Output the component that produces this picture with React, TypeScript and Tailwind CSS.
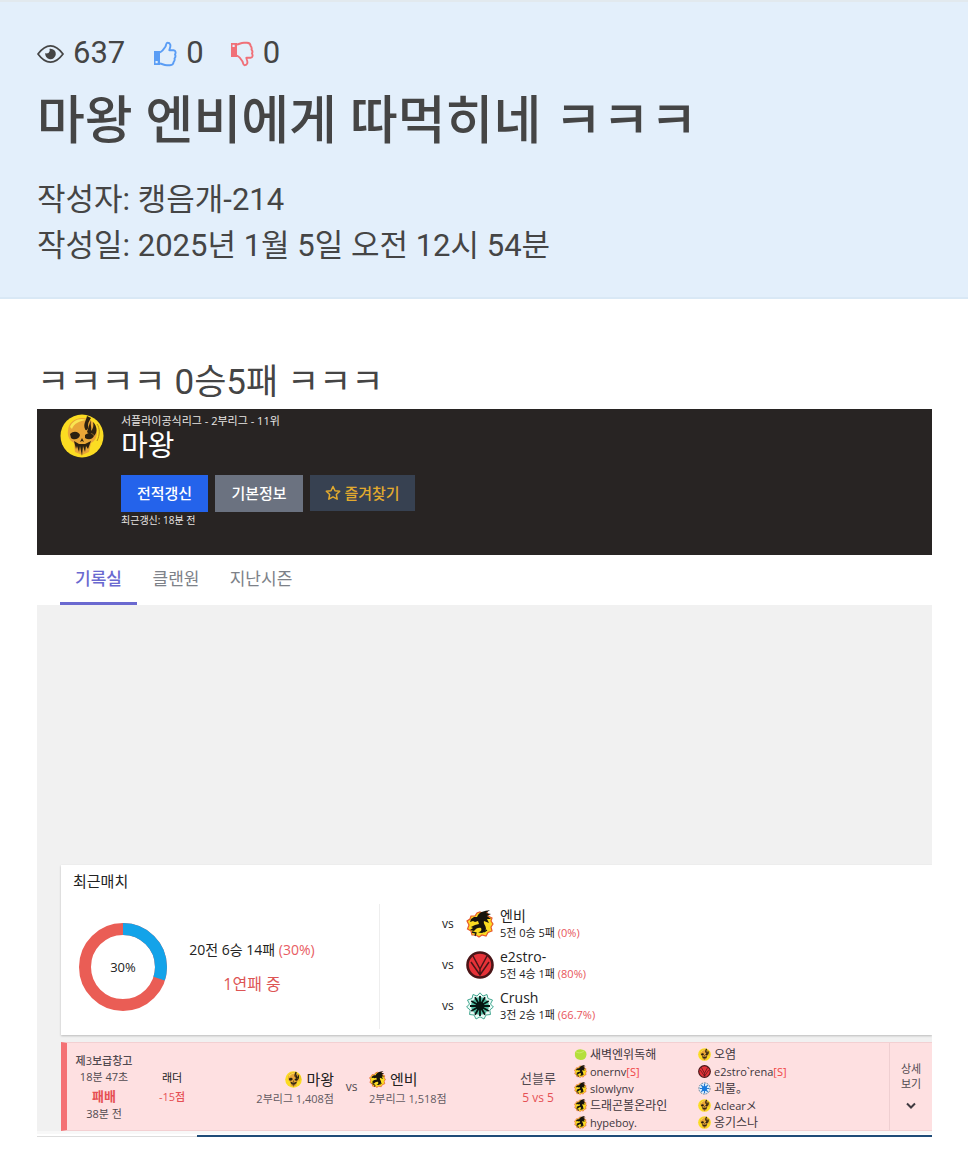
import type { ReactNode } from 'react';

type LogoProps = { className?: string };

function SkullLogo({ className = '' }: LogoProps) {
  return (
    <svg viewBox="0 0 44 44" className={className} aria-hidden="true">
      <circle cx="22" cy="22" r="21.5" fill="#fbdc22" />
      <path d="M8 17C8 9 15 4 22 4C31 4 37 10 37 18C37 23 35 27 31 29L29 38L22 41L15 38L14 29C10 27 7 22 8 17Z" fill="#e9a637" />
      <path d="M10 13C12 7 20 3 26 6C20 7 14 9 12 15Z" fill="#f9e552" />
      <path d="M27 2C26 7 23 10 25 15C26 18 29 15 28 11C28 8 30 6 31 4Z" fill="#2c2110" />
      <path d="M31 6C30 11 32 13 31 17C33 15 34 11 33 8C37 12 38 18 34 22C33 19 31 19 30 21L27 18C28 15 29 11 31 6Z" fill="#2c2110" />
      <path d="M10 20C14 16 19 18 20 21C19 26 13 26 11 24Z" fill="#2c2110" />
      <path d="M25 21C28 18 33 19 34 22C32 26 28 26 25 24Z" fill="#2c2110" />
      <path d="M22 24L20 28L22 27L24 28Z" fill="#2c2110" />
      <path d="M14 27L19 30H25L31 27L28 35L26 32L25 38L23 32L22 42L20 32L19 38L17 32L16 35Z" fill="#2c2110" />
      <path d="M37 10C40 14 40 21 37 27" fill="none" stroke="#b78a18" strokeWidth="1" />
    </svg>
  );
}

function DragonLogo({ className = '' }: LogoProps) {
  return (
    <svg viewBox="0 0 28 28" className={className} aria-hidden="true">
      <path d="M14 2L17 3L21 2.500L22 6L26 8L25 11L27 14L25 17L26 21L22 22.500L20 26L16 25L13 27L10 25L6 25L5 21L1.500 19L3 15L1 11L4 9L5 6L9 6L11 3Z" fill="#fbdc22" stroke="#e8592c" strokeWidth="1.200" />
      <path d="M12 5C14 2 18 1 24 0L20 3L25 4L21 6L25 9L21 9L23 13L18 11C17 14 20 15 20 19C19 23 15 24 12 22C15 22 16 20 15 18C13 17 10 18 8 21L4 20L7 18L5 17L9 15L13 14L12 11L9 12L7 11L4 12L5 9L8 7L11 7Z" fill="#17140c" />
      <path d="M6 22L10 23L9 26M18 22L21 20" fill="none" stroke="#17140c" strokeWidth="1.300" />
    </svg>
  );
}

function ArrowLogo({ className = '' }: LogoProps) {
  return (
    <svg viewBox="0 0 28 28" className={className} aria-hidden="true">
      <circle cx="14" cy="14" r="12.500" fill="#e63238" stroke="#4a1517" strokeWidth="2.600" />
      <path d="M7 5L14 18L21 5M5 11L14 24L23 11M14 18V24" stroke="#4a1517" strokeWidth="1.500" fill="none" />
    </svg>
  );
}

function BurstLogo({ className = '' }: LogoProps) {
  return (
    <svg viewBox="0 0 28 28" className={className} aria-hidden="true">
      <path d="M14 .8L17 4L21 2.500L22 6.500L26.500 8L24.500 12L27.400 15L23.800 18L24.500 22.500L20 23L18 27L14 24.800L10 27L8 23L3.500 22.500L4.200 18L.6 15L3.500 12L1.500 8L6 6.500L7 2.500L11 4Z" fill="#e9fbf6" stroke="#45a892" strokeWidth="1" />
      <circle cx="14" cy="14" r="9" fill="#51b89f" />
      <circle cx="14" cy="14" r="4" fill="#050b0a" />
      <path d="M14 4V24M4 14H24M9 5.300L19 22.700M19 5.300L9 22.700M5.300 9L22.700 19M5.300 19L22.700 9" stroke="#071512" strokeWidth="1.800" />
    </svg>
  );
}

function BallLogo({ className = '' }: LogoProps) {
  return (
    <svg viewBox="0 0 14 14" className={className} aria-hidden="true">
      <path d="M1 5Q3 1 8 1.500Q13.500 2 13.500 7Q13 13 7 13Q0 12 1 5Z" fill="#b4df3b" />
      <path d="M2 4Q6 7 11 3" stroke="#cdea70" fill="none" />
    </svg>
  );
}

function GearLogo({ className = '' }: LogoProps) {
  return (
    <svg viewBox="0 0 14 14" className={className} aria-hidden="true">
      <circle cx="7" cy="7" r="6" fill="#dceeff" stroke="#56778f" strokeDasharray="2 1" />
      <path d="M7 2V12M2 7H12M3.500 3.500L10.500 10.500M10.500 3.500L3.500 10.500" stroke="#2878cc" strokeWidth="1.200" />
      <circle cx="7" cy="7" r="2.800" fill="#1879dd" />
    </svg>
  );
}

function EyeIcon() {
  return (
    <svg viewBox="0 0 28 20" className="mt-[2px] h-5 w-7" aria-hidden="true">
      <path d="M1 10Q7 1.800 13.500 1.800T26 10Q20 18.200 13.500 18.200T1 10Z" fill="none" stroke="#454545" strokeWidth="1.700" />
      <path d="M13.500 4.700A5.300 5.300 0 1 1 8.300 9Q9.500 9.800 11.500 9Q13.500 7.500 12.500 4.800Z" fill="#454545" />
    </svg>
  );
}

function ThumbIcon({ className = '' }: LogoProps) {
  return (
    <svg viewBox="0 0 24 26" className={className} aria-hidden="true">
      <path d="M1 10H7V24H1Z" fill="currentColor" />
      <rect x="2.500" y="20" width="2.200" height="2.200" fill="#e3effb" />
      <path d="M7 11.500C10 10 11.500 7 12.500 5.500C13.200 4 13 1.800 14.500 1.800C17.500 1.800 18 4.500 16.800 7.500L16.300 9.200H20.500C23 9.500 22.900 12 22 13.500C22.800 15 22.300 16.500 21.500 17.300C22 19 21.500 20 20.700 20.800C20.500 23.500 19 24.200 17 24.200H14C11 24.200 9.500 23 7 22.500" fill="none" stroke="currentColor" strokeWidth="1.900" strokeLinejoin="round" />
    </svg>
  );
}

type Rival = { name: string; record: string; rate: string; logo: ReactNode };

const rivals: Rival[] = [
  { name: '엔비', record: '5전 0승 5패', rate: '(0%)', logo: <DragonLogo className="size-7" /> },
  { name: 'e2stro-', record: '5전 4승 1패', rate: '(80%)', logo: <ArrowLogo className="size-7" /> },
  { name: 'Crush', record: '3전 2승 1패', rate: '(66.7%)', logo: <BurstLogo className="size-7" /> },
];

type Player = { name: string; tag?: string; logo: ReactNode };

const small = 'size-[13px]';

const homeTeam: Player[] = [
  { name: '새벽엔위독해', logo: <BallLogo className={small} /> },
  { name: 'onernv', tag: '[S]', logo: <DragonLogo className={small} /> },
  { name: 'slowlynv', logo: <DragonLogo className={small} /> },
  { name: '드래곤볼온라인', logo: <DragonLogo className={small} /> },
  { name: 'hypeboy.', logo: <DragonLogo className={small} /> },
];

const awayTeam: Player[] = [
  { name: '오염', logo: <SkullLogo className={small} /> },
  { name: 'e2stro`rena', tag: '[S]', logo: <ArrowLogo className={small} /> },
  { name: '괴물。', logo: <GearLogo className={small} /> },
  { name: 'Aclearメ', logo: <SkullLogo className={small} /> },
  { name: '옹기스나', logo: <SkullLogo className={small} /> },
];

const hangul = /[가-힣]/;

function Roster({ players, className }: { players: Player[]; className: string }) {
  return (
    <ul className={`shrink-0 pt-[3px] leading-[17px] whitespace-nowrap text-[#40363c] ${className}`}>
      {players.map((p) => (
        <li key={p.name} className="flex h-[17px] items-center gap-[3px]">
          {p.logo}
          <span className={hangul.test(p.name) ? 'text-[12px]' : 'text-[11px]'}>
            {p.name}
            {p.tag && <span className="text-[#ef4444]">{p.tag}</span>}
          </span>
        </li>
      ))}
    </ul>
  );
}

function PostHeader() {
  return (
    <header className="border-y-2 border-t-[#e2e9ee] border-b-[#d9e8f5] bg-[#e3effb] px-[37px] pt-[31px] pb-[28px]">
      <div className="flex items-center text-[31px] leading-10">
        <span className="flex items-center gap-2">
          <EyeIcon />
          637
        </span>
        <span className="ml-[28px] flex items-center gap-[9px]">
          <ThumbIcon className="mt-[2px] h-[26px] w-6 text-[#5a9df5]" />
          0
        </span>
        <span className="ml-[26px] flex items-center gap-[9px]">
          <ThumbIcon className="mt-[2px] h-[26px] w-6 -scale-y-100 text-[#f07078]" />
          0
        </span>
      </div>
      <h1 className="mt-[11px] text-[52px] leading-[76px] font-medium">마왕 엔비에게 따먹히네 ㅋㅋㅋ</h1>
      <div className="mt-[17px] text-[31px] leading-[46px]">
        <p>작성자: 캥음개-214</p>
        <p>작성일: 2025년 1월 5일 오전 12시 54분</p>
      </div>
    </header>
  );
}

function Profile() {
  return (
    <section className="flex h-[146px] gap-[17px] bg-[#282423] pt-[5px] pl-[23px] text-white">
      <SkullLogo className="size-[44px]" />
      <div>
        <p className="text-[11px] leading-[14px] text-[#e8e6e3]">서플라이공식리그 - 2부리그 - 11위</p>
        <h2 className="text-[29px] leading-[34px]">마왕</h2>
        <div className="mt-[13px] flex gap-[7px] text-[15px] leading-5 font-medium">
          <button className="h-[37px] w-[87px] bg-[#2463eb] pb-[2px]">전적갱신</button>
          <button className="h-[37px] w-[88px] bg-[#6b7280] pb-[2px]">기본정보</button>
          <button className="flex h-[36px] w-[105px] items-center justify-center gap-[3px] bg-[#374151] pb-px text-[#e2aa2e]">
            <svg viewBox="0 0 16 16" className="size-4" fill="none" stroke="currentColor" strokeWidth="1.500" strokeLinejoin="round" aria-hidden="true">
              <path d="M8 1.500L10 5.700L14.700 6.300L11.300 9.500L12.200 14.200L8 11.900L3.800 14.200L4.700 9.500L1.300 6.300L6 5.700Z" />
            </svg>
            즐겨찾기
          </button>
        </div>
        <p className="mt-px text-[10px] leading-[14px] text-[#e8e6e3]">최근갱신: 18분 전</p>
      </div>
    </section>
  );
}

function Tabs() {
  return (
    <nav className="flex h-[50px] bg-white pl-[23px] text-[17px] text-[#7d8188]">
      <a href="#records" className="flex w-[77px] items-center justify-center border-b-[3px] border-[#6a69d0] font-medium text-[#6a69d0]">기록실</a>
      <a href="#clan" className="flex w-[78px] items-center justify-center border-b-[3px] border-transparent">클랜원</a>
      <a href="#seasons" className="flex w-[92px] items-center justify-center border-b-[3px] border-transparent">지난시즌</a>
    </nav>
  );
}

function RecentMatches() {
  return (
    <section className="h-[170px] bg-white pt-[7px] shadow-[0_1px_2px_#bbbbbb]">
      <h3 className="pl-[12px] text-[15px] leading-[18px]">최근매치</h3>
      <div className="mt-[14px] flex">
        <div className="flex h-[125px] w-[319px] shrink-0 items-center border-r border-[#eeeeee] pl-[18px]">
          <svg viewBox="0 0 88 88" className="size-[88px] shrink-0" role="img" aria-label="30%">
            <circle cx="44" cy="44" r="38" fill="none" stroke="#ea5d55" strokeWidth="12" />
            <circle cx="44" cy="44" r="38" fill="none" stroke="#13a3e9" strokeWidth="12" pathLength="100" strokeDasharray="30 70" transform="rotate(-90 44 44)" />
            <text x="44" y="49" textAnchor="middle" fontSize="13" fill="#222222">30%</text>
          </svg>
          <div className="w-[170px] text-center">
            <p className="text-[14px] leading-[22px] whitespace-nowrap">
              20전 6승 14패 <span className="text-[#e85d63]">(30%)</span>
            </p>
            <p className="mt-3 text-[16px] leading-[22px] text-[#dd5555]">1연패 중</p>
          </div>
        </div>
        <ul className="-mt-px ml-[62px]">
          {rivals.map((r) => (
            <li key={r.name} className="flex h-[41px] items-center whitespace-nowrap">
              <span className="w-6 text-[12px]">vs</span>
              {r.logo}
              <div className="ml-[6px]">
                <p className="text-[14px] leading-[18px]">{r.name}</p>
                <p className="text-[11px] leading-4">
                  {r.record} <span className="text-[#e8555b]">{r.rate}</span>
                </p>
              </div>
            </li>
          ))}
        </ul>
      </div>
    </section>
  );
}

function Side({ logo, name, score, className }: { logo: ReactNode; name: string; score: string; className: string }) {
  return (
    <div className={`shrink-0 whitespace-nowrap ${className}`}>
      <p className="flex items-center gap-[4px] text-[15px] leading-5 text-[#222222]">
        {logo}
        {name}
      </p>
      <p className="text-[11px] leading-5 text-[#625a61]">{score}</p>
    </div>
  );
}

function MatchRow() {
  return (
    <section className="mt-[7px] flex h-[89px] border-y border-l-[6px] border-y-[#f3d0d2] border-l-[#f47174] bg-[#fee0e1] text-[#514a50]">
      <div className="w-[74px] shrink-0 pt-[10px] text-center text-[11px] leading-4">
        <p className="font-medium">제3보급창고</p>
        <p>18분 47초</p>
        <p className="mt-px text-[13px] leading-5 font-bold text-[#e65055]">패배</p>
        <p>38분 전</p>
      </div>
      <div className="w-[62px] shrink-0 pt-[25px] text-center text-[11px] leading-[19px]">
        <p className="text-[#222222]">래더</p>
        <p className="font-medium text-[#e65055]">-15점</p>
      </div>
      <Side className="flex w-[131px] flex-col items-end pt-[26px]" logo={<SkullLogo className="size-[17px]" />} name="마왕" score="2부리그 1,408점" />
      <span className="w-[35px] shrink-0 pt-[34px] text-center text-[12px] leading-5">vs</span>
      <Side className="w-[133px] pt-[26px]" logo={<DragonLogo className="size-[17px]" />} name="엔비" score="2부리그 1,518점" />
      <div className="w-[72px] shrink-0 pt-[25px] text-center leading-5">
        <p className="text-[13px]">선블루</p>
        <p className="text-[12px] text-[#e65055]">5 vs 5</p>
      </div>
      <Roster players={homeTeam} className="w-[124px]" />
      <Roster players={awayTeam} className="w-[140px]" />
      <button className="ml-auto flex w-[43px] shrink-0 flex-col items-center border-l border-[#efcfd1] pt-[18px] text-[11px] leading-[15px]">
        <span>상세</span>
        <span>보기</span>
        <svg viewBox="0 0 10 8" className="mt-[11px] h-2 w-[10px]" fill="none" stroke="#403a40" strokeWidth="2" aria-hidden="true">
          <path d="M1 1.500L5 5.500L9 1.500" />
        </svg>
      </button>
    </section>
  );
}

export default function App() {
  return (
    <div className="min-h-screen bg-white font-[Roboto,'Noto_Sans_CJK_KR',sans-serif] text-[#454545]">
      <PostHeader />
      <main className="pt-[57px] pr-9 pl-[37px]">
        <p className="text-[35px] leading-[53px]">ㅋㅋㅋㅋ 0승5패 ㅋㅋㅋ</p>
        <div className="overflow-hidden font-['Open_Sans','Noto_Sans_CJK_KR',sans-serif] text-[#222222]">
          <Profile />
          <Tabs />
          <div className="bg-[#f1f1f1] pt-[260px] pl-[24px]">
            <RecentMatches />
            <MatchRow />
          </div>
          <div className="h-[3px] bg-[#f8f8f8]" />
          <div className="flex h-[3px]">
            <div className="w-[160px] border-b border-[#dddddd]" />
            <div className="flex-1 border-b-2 border-[#1f4c78]" />
          </div>
        </div>
      </main>
    </div>
  );
}
